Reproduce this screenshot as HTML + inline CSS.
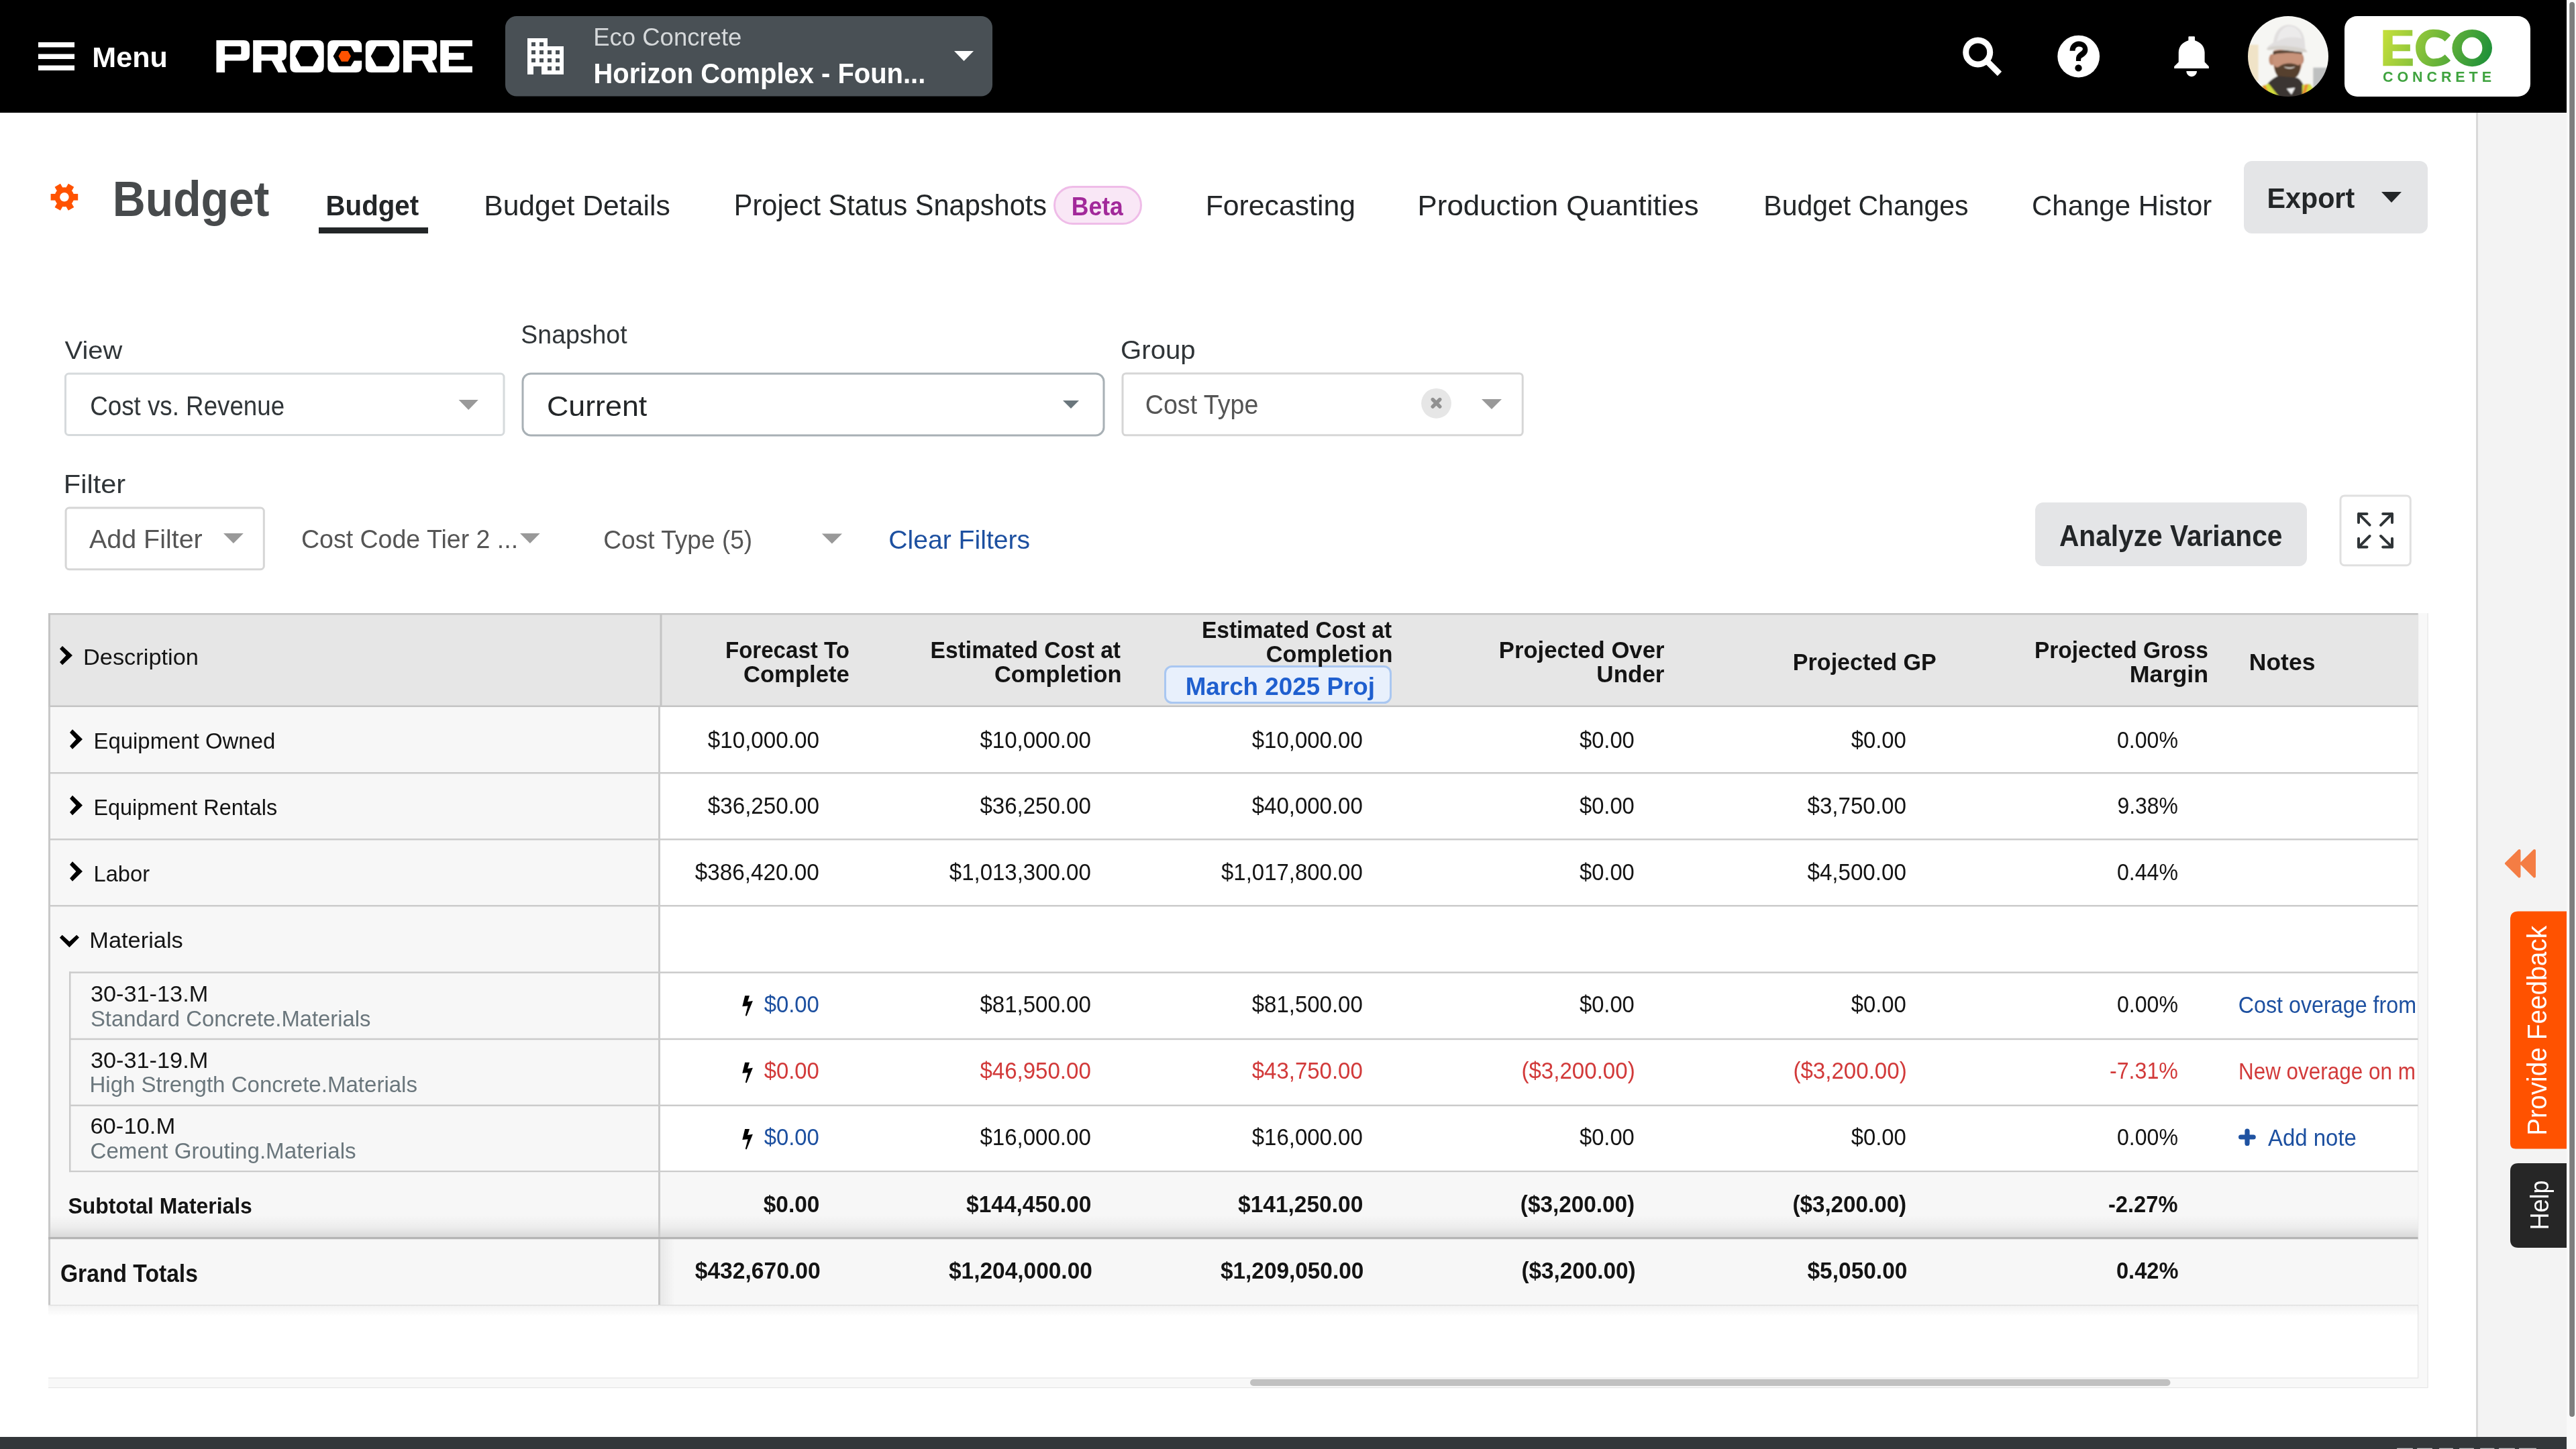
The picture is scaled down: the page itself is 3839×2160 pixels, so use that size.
<!DOCTYPE html>
<html><head><meta charset="utf-8"><title>Budget</title>
<style>
html,body{margin:0;padding:0;width:3839px;height:2160px;overflow:hidden;background:#fff;}
svg{position:absolute;left:0;top:0;display:block;will-change:transform;}
text{font-family:"Liberation Sans",sans-serif;white-space:pre;}
</style></head>
<body>
<svg width="3839" height="2160" viewBox="0 0 3839 2160">
<defs>
<clipPath id="notes"><rect x="3300" y="1400" width="302.5" height="300"/></clipPath>
<clipPath id="av"><circle cx="3410" cy="84" r="60"/></clipPath>
<linearGradient id="eco" x1="0" y1="0" x2="1" y2="1"><stop offset="0" stop-color="#c4de3a"/><stop offset="1" stop-color="#1f8f3a"/></linearGradient>
<linearGradient id="subsh" x1="0" y1="0" x2="0" y2="1"><stop offset="0" stop-color="#000" stop-opacity="0"/><stop offset="0.55" stop-color="#000" stop-opacity="0.045"/><stop offset="1" stop-color="#000" stop-opacity="0.12"/></linearGradient>
<linearGradient id="gtsh" x1="0" y1="0" x2="0" y2="1"><stop offset="0" stop-color="#000" stop-opacity="0.05"/><stop offset="1" stop-color="#000" stop-opacity="0"/></linearGradient>
<linearGradient id="colsh" x1="0" y1="0" x2="1" y2="0"><stop offset="0" stop-color="#000" stop-opacity="0.06"/><stop offset="1" stop-color="#000" stop-opacity="0"/></linearGradient>
</defs>
<!-- top bar -->
<rect x="0" y="0" width="3825" height="168" fill="#000"/>
<rect x="57" y="63" width="54" height="7.5" fill="#fff"/>
<rect x="57" y="80.5" width="54" height="7.5" fill="#fff"/>
<rect x="57" y="97.5" width="54" height="7.5" fill="#fff"/>
<g transform="translate(310 50) scale(0.15916)" fill="#fff" fill-rule="evenodd">
<path d="M78,63 H335 Q390,63 390,118 V200 Q390,255 335,255 H158 V365 H78 Z M158,120 V197 H298 Q310,197 310,185 V132 Q310,120 298,120 Z"/>
<path d="M422,63 H680 Q735,63 735,118 V200 Q735,248 690,255 L740,365 H658 L597,255 H500 V365 H422 Z M500,120 V197 H643 Q655,197 655,185 V132 Q655,120 643,120 Z"/>
<path d="M823,63 H1030 Q1085,63 1085,118 V310 Q1085,365 1030,365 H823 Q768,365 768,310 V118 Q768,63 823,63 Z M818,212 L868,120 H982 L1035,212 L982,307 H868 Z"/>
<path d="M1175,63 H1385 Q1440,63 1440,118 V175 H1368 L1337,120 H1225 L1172,212 L1225,307 H1337 L1368,255 H1440 V310 Q1440,365 1385,365 H1175 Q1120,365 1120,310 V118 Q1120,63 1175,63 Z"/>
<path d="M1222,212 L1250,163 H1310 L1338,212 L1310,263 H1250 Z" fill="#ff5200"/>
<path d="M1530,63 H1737 Q1792,63 1792,118 V310 Q1792,365 1737,365 H1530 Q1475,365 1475,310 V118 Q1475,63 1530,63 Z M1525,212 L1578,120 H1690 L1743,212 L1690,307 H1578 Z"/>
<path d="M1828,63 H2088 Q2143,63 2143,118 V200 Q2143,248 2098,255 L2148,365 H2066 L2005,255 H1908 V365 H1828 Z M1908,120 V197 H2051 Q2063,197 2063,185 V132 Q2063,120 2051,120 Z"/>
<path d="M2175,63 H2475 V120 H2255 V180 H2395 V245 H2255 V307 H2475 V365 H2175 Z"/>
</g>
<rect x="753" y="24" width="726" height="119.5" rx="17" fill="#495055"/>
<g transform="translate(786 57) scale(6)">
<path d="M0,0 H5 V2 H9 V9 H3.5 V7 H1.5 V9 H0 Z" fill="#fff"/>
<g fill="#495055"><rect x="1" y="1" width="1" height="1"/><rect x="3" y="1" width="1" height="1"/>
<rect x="1" y="3" width="1" height="1"/><rect x="3" y="3" width="1" height="1"/><rect x="5" y="3" width="1" height="1"/><rect x="7" y="3" width="1" height="1"/>
<rect x="1" y="5" width="1" height="1"/><rect x="3" y="5" width="1" height="1"/><rect x="5" y="5" width="1" height="1"/><rect x="7" y="5" width="1" height="1"/>
<rect x="5" y="7" width="1" height="1"/><rect x="7" y="7" width="1" height="1"/></g>
</g>
<polygon points="1422,76 1451,76 1436.5,91" fill="#fff"/>
<!-- search -->
<circle cx="2947.7" cy="77.9" r="18" fill="none" stroke="#fff" stroke-width="9"/>
<line x1="2961" y1="91" x2="2980" y2="110" stroke="#fff" stroke-width="8.9"/>
<!-- help -->
<circle cx="3097.7" cy="84.1" r="31.4" fill="#fff"/>
<g transform="translate(2910 40) scale(0.089286)" fill="#000">
<path d="M1955,400 C1955,300 2030,240 2105,240 C2190,240 2255,300 2255,380 C2255,450 2205,490 2150,520 C2143,526 2140,540 2140,570 H2060 V535 C2060,480 2090,450 2130,420 C2160,400 2172,388 2172,368 C2172,345 2150,330 2108,330 C2070,330 2045,355 2045,400 Z"/>
<circle cx="2100" cy="688" r="58"/>
</g>
<!-- bell -->
<g transform="translate(3220 40) scale(0.10093)" fill="#fff">
<path d="M410,200 V150 Q410,140 420,140 H495 Q505,140 505,150 V200 C590,225 650,290 650,380 V520 L712,585 V615 H200 V585 L265,520 V380 C265,290 325,225 410,200 Z M380,655 H535 C535,700 500,735 457,735 C415,735 380,700 380,655 Z"/>
</g>
<!-- avatar -->
<defs><filter id="avblur" x="-5%" y="-5%" width="110%" height="110%"><feGaussianBlur stdDeviation="9"/></filter></defs>
<g clip-path="url(#av)">
<g transform="translate(3345 20) scale(0.08972)" filter="url(#avblur)">
<rect x="0" y="0" width="1449" height="1449" fill="#f6f6f3"/>
<rect x="40" y="520" width="190" height="600" fill="#e9cf9c" opacity="0.5"/>
<rect x="1140" y="900" width="260" height="380" fill="#7a7f82" opacity="0.45"/>
<ellipse cx="455" cy="770" rx="50" ry="95" fill="#c08a70"/>
<ellipse cx="950" cy="760" rx="35" ry="80" fill="#b98268"/>
<path d="M480,620 C520,590 900,590 955,640 C975,760 960,900 900,1000 C850,1070 780,1100 715,1100 C640,1100 560,1060 520,990 C470,900 465,760 480,620 Z" fill="#c8937a"/>
<path d="M470,640 C520,600 900,600 955,650 L950,680 C880,650 540,650 480,690 Z" fill="#5a4434"/>
<path d="M500,860 C530,930 570,880 630,850 C690,825 800,825 860,850 C900,870 915,860 925,830 C940,920 915,1010 860,1060 C800,1100 640,1110 570,1060 C515,1010 490,930 500,860 Z" fill="#56402f"/>
<path d="M650,880 C700,905 800,905 840,880 C820,925 690,930 650,880 Z" fill="#f3efe9"/>
<path d="M380,1170 C440,1100 520,1050 560,1040 L880,1070 C930,1100 960,1150 980,1190 L1000,1449 L380,1449 Z" fill="#3a3430"/>
<path d="M700,1250 L840,1235 L780,1350 Z" fill="#f2f2f2"/>
<path d="M280,1210 L400,1165 L570,1380 L560,1449 L420,1449 Z" fill="#d3dc3e"/>
<path d="M300,1205 L345,1190 L450,1449 L400,1449 Z" fill="#e98a34"/>
<path d="M960,1185 L1090,1170 L1150,1260 L1040,1449 L960,1449 Z" fill="#d3dc3e"/>
<path d="M1005,1180 L1060,1175 L1000,1380 L965,1330 Z" fill="#e98a34"/>
<path d="M365,600 C380,540 440,520 480,480 C500,300 600,190 730,190 C880,190 990,300 1000,470 L1010,600 C1030,612 1046,628 1042,642 C900,655 700,600 560,598 C470,598 400,620 365,600 Z" fill="#e1dfdf"/>
<path d="M540,470 C560,320 640,220 740,215 C860,215 930,300 950,420 C850,380 650,380 540,470 Z" fill="#ecebeb"/>
<path d="M370,595 C400,560 440,550 480,545 C700,530 900,560 1010,600 L1040,640 C900,650 700,605 560,600 C470,600 400,620 370,595 Z" fill="#d6d2cc"/>
</g>
</g>
<!-- eco logo -->
<rect x="3494" y="24" width="277" height="120" rx="19" fill="#fff"/>
<g transform="translate(3490 20) scale(0.11257)">
<defs><linearGradient id="eco2" gradientUnits="userSpaceOnUse" x1="560" y1="220" x2="1900" y2="740"><stop offset="0" stop-color="#c5df3b"/><stop offset="0.5" stop-color="#72b83a"/><stop offset="1" stop-color="#1f9139"/></linearGradient></defs>
<path d="M545,220 H935 V297 H672 V410 H905 V500 H672 V597 H940 V695 H545 Z" fill="url(#eco2)"/>
<path d="M1440,290 C1395,240 1310,212 1209,212 C1075,212 978,320 978,458 C978,596 1075,703 1209,703 C1310,703 1395,676 1440,625 L1365,545 C1330,585 1275,600 1215,600 C1150,600 1105,540 1105,458 C1105,376 1150,315 1215,315 C1275,315 1330,330 1365,370 Z" fill="url(#eco2)"/>
<path d="M1460,458 A265,245 0 1 0 1990,458 A265,245 0 1 0 1460,458 Z M1588,458 A136,143 0 1 1 1860,458 A136,143 0 1 1 1588,458 Z" fill="url(#eco2)" fill-rule="evenodd"/>
</g>
<text x="3551" y="122" font-size="21.5" font-weight="bold" fill="#3fa33f" textLength="162" lengthAdjust="spacing">CONCRETE</text>
<!-- right scrollbar + panel -->
<rect x="3825" y="0" width="14" height="2160" fill="#f9f9f9"/>
<rect x="3829.2" y="3" width="7.8" height="2109" rx="3.9" fill="#7f7f7f"/>
<rect x="3690" y="168" width="135" height="1974" fill="#f3f3f3"/>
<rect x="3690" y="168" width="3" height="1974" fill="#d9d9d9"/>
<path d="M3754.5,1268 L3754.5,1306.5 L3735,1287.2 Z M3777,1268 L3777,1306.5 L3757.5,1287.2 Z" fill="#f47d44" stroke="#f47d44" stroke-width="4" stroke-linejoin="round"/>
<path d="M3753,1358.5 H3825 V1712.5 H3749 Q3741,1712.5 3741,1704.5 V1370.5 Q3741,1358.5 3753,1358.5 Z" fill="#ff5200"/>
<path d="M3753,1734 H3825 V1860 H3753 Q3741,1860 3741,1848 V1746 Q3741,1734 3753,1734 Z" fill="#262626"/>
<text transform="translate(3795.3 1692.8) rotate(-90)" font-size="40" fill="#fff" textLength="313" lengthAdjust="spacingAndGlyphs">Provide Feedback</text>
<text transform="translate(3797.6 1833.5) rotate(-90)" font-size="39.5" fill="#fff" textLength="74" lengthAdjust="spacingAndGlyphs">Help</text>
<!-- bottom bar -->
<rect x="0" y="2142" width="3825" height="18" fill="#33373a"/>
<rect x="3572" y="2158.8" width="24" height="1.2" fill="#c9cacb" rx="0.6"/><rect x="3602" y="2158.8" width="23" height="1.2" fill="#c9cacb" rx="0.6"/><rect x="3635" y="2158.8" width="21" height="1.2" fill="#c9cacb" rx="0.6"/><rect x="3665" y="2158.8" width="22" height="1.2" fill="#c9cacb" rx="0.6"/><rect x="3696" y="2158.8" width="21.5" height="1.2" fill="#c9cacb" rx="0.6"/><rect x="3724" y="2158.8" width="24" height="1.2" fill="#c9cacb" rx="0.6"/><rect x="3754" y="2158.8" width="26" height="1.2" fill="#c9cacb" rx="0.6"/>
<!-- gear -->
<g transform="translate(95.9 293.8)" fill="#ff5200">
<circle r="14.5"/>
<rect x="-20.3" y="-4.85" width="40.6" height="9.7"/>
<rect x="-20.3" y="-4.85" width="40.6" height="9.7" transform="rotate(60)"/>
<rect x="-20.3" y="-4.85" width="40.6" height="9.7" transform="rotate(120)"/>
<circle r="6.8" fill="#fff"/>
</g>
<!-- tabs -->
<rect x="475" y="339" width="163" height="9" fill="#232628"/>
<rect x="1571.5" y="278.5" width="129" height="55" rx="27.5" fill="#f9e7f6" stroke="#efbce8" stroke-width="3"/>
<rect x="3344" y="240" width="274" height="108" rx="12" fill="#e4e5e7"/>
<polygon points="3549,286 3579,286 3564,302" fill="#232628"/>
<!-- selects -->
<rect x="97.5" y="557" width="653.5" height="91.5" rx="5" fill="#fff" stroke="#d6dadc" stroke-width="3"/>
<polygon points="683.6,596 712.8,596 698.2,611" fill="#999"/>
<rect x="779" y="556.9" width="866" height="92" rx="12" fill="#fff" stroke="#a8b0b5" stroke-width="3"/>
<polygon points="1584,597 1608,597 1596,609" fill="#6a767c"/>
<rect x="1673" y="556.7" width="596.2" height="92.1" rx="5" fill="#fff" stroke="#d6d6d6" stroke-width="3"/>
<circle cx="2140.5" cy="601.3" r="22.4" fill="#e6e6e6"/>
<path d="M2135.2,595.5 L2145.8,606.1 M2145.8,595.5 L2135.2,606.1" stroke="#919191" stroke-width="5.4" stroke-linecap="round"/>
<polygon points="2208,595 2238,595 2223,610" fill="#999"/>
<rect x="98.1" y="757" width="295.2" height="91.7" rx="5" fill="#fff" stroke="#d6d6d6" stroke-width="3"/>
<polygon points="333,795 362.8,795 347.9,810" fill="#999"/>
<polygon points="775,795 804.7,795 789.9,810" fill="#999"/>
<polygon points="1224.8,795.4 1255,795.4 1239.9,810.4" fill="#999"/>
<rect x="3033" y="749" width="405" height="95" rx="12" fill="#e4e5e7"/>
<rect x="3488" y="738.9" width="104.3" height="103.8" rx="6" fill="#fff" stroke="#e0e0e0" stroke-width="3"/>
<g stroke="#2f3437" stroke-width="4" stroke-linecap="round" stroke-linejoin="round" fill="none">
<path d="M3527.5,765.9 H3515 V778.9 M3515,765.9 L3531.6,782.6"/>
<path d="M3551.2,765.9 H3565 V778.9 M3565,765.9 L3548.1,782.8"/>
<path d="M3527.5,815.6 H3515 V802.8 M3515,815.6 L3531.6,799"/>
<path d="M3551.2,815.6 H3565 V802.8 M3565,815.6 L3548.1,799"/>
</g>
<!-- table frame -->
<rect x="72" y="914" width="3546" height="1155" fill="#f8f8f8"/>
<rect x="72" y="914" width="3531.5" height="1140" fill="#fff"/>
<g fill="#e6e6e6">
<rect x="72" y="2053.5" width="3531.5" height="1.2"/>
<rect x="72" y="2068" width="3546" height="1.2"/>
<rect x="3603" y="914" width="1.2" height="1140.7"/>
<rect x="3617.5" y="914" width="1.2" height="1155"/>
</g>
<rect x="1863" y="2056" width="1371.5" height="10" rx="5" fill="#c1c1c1"/>
<!-- header -->
<rect x="72" y="914" width="3531.5" height="140" fill="#e6e6e6"/>
<rect x="72" y="914" width="3531.5" height="2.5" fill="#c4c4c4"/>
<rect x="72" y="1051.5" width="3531.5" height="2.5" fill="#c4c4c4"/>
<rect x="983.5" y="914" width="3" height="140" fill="#c4c4c4"/>
<rect x="72" y="914" width="3" height="140" fill="#c4c4c4"/>
<rect x="1736.5" y="993.5" width="336" height="54" rx="10" fill="#e8f0fc" stroke="#a9c7f1" stroke-width="3"/>
<!-- body -->
<rect x="75" y="1054" width="907" height="790" fill="#f7f7f7"/>
<g fill="#cbcbcb">
<rect x="72" y="1151" width="3531.5" height="2.5"/>
<rect x="72" y="1250" width="3531.5" height="2.5"/>
<rect x="72" y="1349" width="3531.5" height="2.5"/>
<rect x="103" y="1448.4" width="3500.5" height="2.5"/>
<rect x="103" y="1547.7" width="3500.5" height="2.5"/>
<rect x="103" y="1646.6" width="3500.5" height="2.5"/>
<rect x="103" y="1745" width="3500.5" height="2.5"/>
<rect x="103" y="1448.4" width="2.5" height="299"/>
</g>
<rect x="75" y="1747.5" width="3528.5" height="96.5" fill="#f7f7f7"/>
<rect x="75" y="1812" width="3528.5" height="32" fill="url(#subsh)"/>
<rect x="72" y="1054" width="3" height="892" fill="#c8c8c8"/>
<rect x="981" y="1054" width="3" height="892" fill="#cbcbcb"/>
<rect x="72" y="1844" width="3531.5" height="3.5" fill="#b4b4b4"/>
<rect x="75" y="1847.5" width="3528.5" height="97.5" fill="#f7f7f7"/>
<rect x="981" y="1847.5" width="3" height="97.5" fill="#c8c8c8"/>
<rect x="984" y="1847.5" width="22" height="97.5" fill="url(#colsh)"/>
<rect x="72" y="1945" width="3531.5" height="1.2" fill="#dcdcdc"/>
<rect x="72" y="1946.2" width="3531.5" height="16" fill="url(#gtsh)"/>
<!-- chevrons -->
<g fill="#000">
<path d="M89,967.3 L93,963 L108,977 L93,991.3 L89,987 L98.5,977 Z"/>
<path d="M104,1092 L108,1087.3 L123,1102 L108,1116.7 L104,1112.3 L113.4,1102 Z"/>
<path d="M104,1190.5 L108,1185.8 L123,1200.5 L108,1215.2 L104,1210.8 L113.4,1200.5 Z"/>
<path d="M104,1289 L108,1284.3 L123,1299 L108,1313.7 L104,1309.3 L113.4,1299 Z"/>
<path d="M88.9,1397.7 L92.7,1393.7 L103.4,1403.6 L114.2,1393.7 L118,1397.5 L103.4,1412.3 Z"/>
</g>
<!-- bolts -->
<g fill="#000">
<path d="M1110.2,1484.2 L1117.0,1484.2 L1114.1,1493.3 L1121.9,1492.1 L1112.9,1514.1 Q1111.8,1515.6 1110.9,1513.6 L1114.6,1499.5 L1106.3,1500.2 Z"/>
<path d="M1110.2,1583.8 L1117.0,1583.8 L1114.1,1592.9 L1121.9,1591.7 L1112.9,1613.7 Q1111.8,1615.2 1110.9,1613.2 L1114.6,1599.1 L1106.3,1599.8 Z"/>
<path d="M1110.2,1682.9 L1117.0,1682.9 L1114.1,1692.0 L1121.9,1690.8 L1112.9,1712.8 Q1111.8,1714.3 1110.9,1712.3 L1114.6,1698.2 L1106.3,1698.9 Z"/>
</g>
<!-- add note plus -->
<path d="M3339.6,1695 H3358.2 M3349,1686 V1704.4" stroke="#1f52a1" stroke-width="7.2" stroke-linecap="round" fill="none"/>

<text transform="translate(137.31 100.00) scale(0.9957 1)" font-size="43.26" font-weight="bold" fill="#ffffff">Menu</text>
<text transform="translate(884.15 68.00) scale(1.0070 1)" font-size="36.28" fill="#d5d8da">Eco Concrete</text>
<text transform="translate(884.50 124.00) scale(0.9235 1)" font-size="43.26" font-weight="bold" fill="#ffffff">Horizon Complex - Foun...</text>
<text transform="translate(167.76 321.50) scale(0.9258 1)" font-size="73.26" font-weight="bold" fill="#474a4c">Budget</text>
<text transform="translate(485.48 320.50) scale(0.9464 1)" font-size="42.56" font-weight="bold" fill="#232628">Budget</text>
<text transform="translate(721.17 321.00) scale(0.9866 1)" font-size="43.26" fill="#232628">Budget Details</text>
<text transform="translate(1093.75 321.00) scale(0.9305 1)" font-size="44.65" fill="#232628">Project Status Snapshots</text>
<text transform="translate(1596.78 320.50) scale(0.9257 1)" font-size="38.37" font-weight="bold" fill="#a2299a">Beta</text>
<text transform="translate(1796.66 321.00) scale(0.9887 1)" font-size="43.26" fill="#232628">Forecasting</text>
<text transform="translate(2112.57 321.00) scale(1.0138 1)" font-size="43.26" fill="#232628">Production Quantities</text>
<text transform="translate(2628.30 321.00) scale(0.9473 1)" font-size="43.26" fill="#232628">Budget Changes</text>
<text transform="translate(3028.03 321.00) scale(0.9699 1)" font-size="43.26" fill="#232628">Change Histor</text>
<text transform="translate(3378.42 310.00) scale(0.9703 1)" font-size="42.56" font-weight="bold" fill="#232628">Export</text>
<text transform="translate(96.60 534.50) scale(1.0572 1)" font-size="37.67" fill="#303538">View</text>
<text transform="translate(776.33 511.70) scale(0.9689 1)" font-size="38.65" fill="#303538">Snapshot</text>
<text transform="translate(1670.12 534.80) scale(1.0160 1)" font-size="39.49" fill="#303538">Group</text>
<text transform="translate(134.28 618.60) scale(0.9204 1)" font-size="39.91" fill="#303538">Cost vs. Revenue</text>
<text transform="translate(814.90 619.70) scale(1.0321 1)" font-size="43.40" fill="#232628">Current</text>
<text transform="translate(1706.74 617.00) scale(0.9461 1)" font-size="39.77" fill="#555555">Cost Type</text>
<text transform="translate(94.75 735.30) scale(1.0649 1)" font-size="39.07" fill="#303538">Filter</text>
<text transform="translate(133.00 816.60) scale(1.0355 1)" font-size="38.09" fill="#555555">Add Filter</text>
<text transform="translate(448.94 817.00) scale(0.9712 1)" font-size="38.65" fill="#555555">Cost Code Tier 2 ...</text>
<text transform="translate(899.26 817.60) scale(0.9428 1)" font-size="39.35" fill="#555555">Cost Type (5)</text>
<text transform="translate(1324.16 818.00) scale(1.0023 1)" font-size="39.07" fill="#1d50a0">Clear Filters</text>
<text transform="translate(3068.96 813.70) scale(0.9030 1)" font-size="45.07" font-weight="bold" fill="#232628">Analyze Variance</text>
<text transform="translate(124.01 990.70) scale(1.0095 1)" font-size="34.05" fill="#141414">Description</text>
<text transform="translate(1080.93 980.50) scale(0.9413 1)" font-size="35.16" font-weight="bold" fill="#141414">Forecast To</text>
<text transform="translate(1107.92 1016.50) scale(0.9859 1)" font-size="35.16" font-weight="bold" fill="#141414">Complete</text>
<text transform="translate(1386.60 980.50) scale(0.9548 1)" font-size="35.16" font-weight="bold" fill="#141414">Estimated Cost at</text>
<text transform="translate(1481.92 1016.50) scale(0.9812 1)" font-size="35.16" font-weight="bold" fill="#141414">Completion</text>
<text transform="translate(1790.90 951.00) scale(0.9538 1)" font-size="35.16" font-weight="bold" fill="#141414">Estimated Cost at</text>
<text transform="translate(1886.73 987.00) scale(0.9770 1)" font-size="35.16" font-weight="bold" fill="#141414">Completion</text>
<text transform="translate(1766.70 1035.60) scale(0.9811 1)" font-size="37.53" font-weight="bold" fill="#1f5fcf">March 2025 Proj</text>
<text transform="translate(2233.83 980.50) scale(0.9860 1)" font-size="35.16" font-weight="bold" fill="#141414">Projected Over</text>
<text transform="translate(2379.36 1016.50) scale(0.9955 1)" font-size="35.16" font-weight="bold" fill="#141414">Under</text>
<text transform="translate(2671.87 998.60) scale(0.9693 1)" font-size="35.16" font-weight="bold" fill="#141414">Projected GP</text>
<text transform="translate(3031.90 980.50) scale(0.9533 1)" font-size="35.16" font-weight="bold" fill="#141414">Projected Gross</text>
<text transform="translate(3173.76 1016.50) scale(1.0192 1)" font-size="35.16" font-weight="bold" fill="#141414">Margin</text>
<text transform="translate(3351.78 998.60) scale(1.0099 1)" font-size="35.16" font-weight="bold" fill="#141414">Notes</text>
<text transform="translate(139.43 1116.00) scale(0.9833 1)" font-size="33.49" fill="#141414">Equipment Owned</text>
<text transform="translate(139.47 1215.00) scale(0.9675 1)" font-size="33.49" fill="#141414">Equipment Rentals</text>
<text transform="translate(139.44 1313.70) scale(0.9774 1)" font-size="33.49" fill="#141414">Labor</text>
<text transform="translate(133.31 1413.00) scale(1.0396 1)" font-size="33.07" fill="#141414">Materials</text>
<text transform="translate(134.93 1493.30) scale(1.0415 1)" font-size="32.93" fill="#141414">30-31-13.M</text>
<text transform="translate(134.97 1529.80) scale(0.9880 1)" font-size="33.21" fill="#6a767c">Standard Concrete.Materials</text>
<text transform="translate(134.93 1591.80) scale(1.0415 1)" font-size="32.93" fill="#141414">30-31-19.M</text>
<text transform="translate(133.42 1628.30) scale(0.9952 1)" font-size="33.21" fill="#6a767c">High Strength Concrete.Materials</text>
<text transform="translate(134.38 1690.40) scale(1.0510 1)" font-size="32.93" fill="#141414">60-10.M</text>
<text transform="translate(134.45 1726.90) scale(0.9987 1)" font-size="33.21" fill="#6a767c">Cement Grouting.Materials</text>
<text transform="translate(101.50 1808.50) scale(0.9593 1)" font-size="33.21" font-weight="bold" fill="#141414">Subtotal Materials</text>
<text transform="translate(89.95 1911.40) scale(0.9134 1)" font-size="36.84" font-weight="bold" fill="#141414">Grand Totals</text>
<text transform="translate(1054.80 1114.80) scale(0.9343 1)" font-size="35.51" fill="#141414">$10,000.00</text>
<text transform="translate(1460.40 1114.80) scale(0.9309 1)" font-size="35.51" fill="#141414">$10,000.00</text>
<text transform="translate(1865.70 1114.80) scale(0.9292 1)" font-size="35.51" fill="#141414">$10,000.00</text>
<text transform="translate(2354.00 1114.80) scale(0.9208 1)" font-size="35.51" fill="#141414">$0.00</text>
<text transform="translate(2758.70 1114.80) scale(0.9242 1)" font-size="35.51" fill="#141414">$0.00</text>
<text transform="translate(3155.00 1114.80) scale(0.9035 1)" font-size="35.51" fill="#141414">0.00%</text>
<text transform="translate(1054.80 1213.30) scale(0.9343 1)" font-size="35.51" fill="#141414">$36,250.00</text>
<text transform="translate(1460.40 1213.30) scale(0.9309 1)" font-size="35.51" fill="#141414">$36,250.00</text>
<text transform="translate(1865.70 1213.30) scale(0.9292 1)" font-size="35.51" fill="#141414">$40,000.00</text>
<text transform="translate(2354.00 1213.30) scale(0.9208 1)" font-size="35.51" fill="#141414">$0.00</text>
<text transform="translate(2693.50 1213.30) scale(0.9327 1)" font-size="35.51" fill="#141414">$3,750.00</text>
<text transform="translate(3155.50 1213.30) scale(0.8984 1)" font-size="35.51" fill="#141414">9.38%</text>
<text transform="translate(1035.70 1312.00) scale(0.9376 1)" font-size="35.51" fill="#141414">$386,420.00</text>
<text transform="translate(1414.80 1312.00) scale(0.9294 1)" font-size="35.51" fill="#141414">$1,013,300.00</text>
<text transform="translate(1820.00 1312.00) scale(0.9285 1)" font-size="35.51" fill="#141414">$1,017,800.00</text>
<text transform="translate(2354.00 1312.00) scale(0.9208 1)" font-size="35.51" fill="#141414">$0.00</text>
<text transform="translate(2693.50 1312.00) scale(0.9327 1)" font-size="35.51" fill="#141414">$4,500.00</text>
<text transform="translate(3155.00 1312.00) scale(0.9035 1)" font-size="35.51" fill="#141414">0.44%</text>
<text transform="translate(1138.70 1508.70) scale(0.9242 1)" font-size="35.51" fill="#1d50a0">$0.00</text>
<text transform="translate(1460.40 1508.70) scale(0.9309 1)" font-size="35.51" fill="#141414">$81,500.00</text>
<text transform="translate(1865.70 1508.70) scale(0.9292 1)" font-size="35.51" fill="#141414">$81,500.00</text>
<text transform="translate(2354.00 1508.70) scale(0.9208 1)" font-size="35.51" fill="#141414">$0.00</text>
<text transform="translate(2758.70 1508.70) scale(0.9242 1)" font-size="35.51" fill="#141414">$0.00</text>
<text transform="translate(3155.00 1508.70) scale(0.9035 1)" font-size="35.51" fill="#141414">0.00%</text>
<text transform="translate(1138.70 1608.30) scale(0.9242 1)" font-size="35.51" fill="#d23a3a">$0.00</text>
<text transform="translate(1460.40 1608.30) scale(0.9309 1)" font-size="35.51" fill="#d23a3a">$46,950.00</text>
<text transform="translate(1865.70 1608.30) scale(0.9292 1)" font-size="35.51" fill="#d23a3a">$43,750.00</text>
<text transform="translate(2267.45 1608.30) scale(0.9321 1)" font-size="35.51" fill="#d23a3a">($3,200.00)</text>
<text transform="translate(2672.45 1608.30) scale(0.9321 1)" font-size="35.51" fill="#d23a3a">($3,200.00)</text>
<text transform="translate(3143.99 1608.30) scale(0.9064 1)" font-size="35.51" fill="#d23a3a">-7.31%</text>
<text transform="translate(1138.70 1707.40) scale(0.9242 1)" font-size="35.51" fill="#1d50a0">$0.00</text>
<text transform="translate(1460.40 1707.40) scale(0.9309 1)" font-size="35.51" fill="#141414">$16,000.00</text>
<text transform="translate(1865.70 1707.40) scale(0.9292 1)" font-size="35.51" fill="#141414">$16,000.00</text>
<text transform="translate(2354.00 1707.40) scale(0.9208 1)" font-size="35.51" fill="#141414">$0.00</text>
<text transform="translate(2758.70 1707.40) scale(0.9242 1)" font-size="35.51" fill="#141414">$0.00</text>
<text transform="translate(3155.00 1707.40) scale(0.9035 1)" font-size="35.51" fill="#141414">0.00%</text>
<text transform="translate(1137.80 1807.00) scale(0.9404 1)" font-size="35.51" font-weight="bold" fill="#141414">$0.00</text>
<text transform="translate(1440.00 1807.00) scale(0.9438 1)" font-size="35.51" font-weight="bold" fill="#141414">$144,450.00</text>
<text transform="translate(1845.00 1807.00) scale(0.9438 1)" font-size="35.51" font-weight="bold" fill="#141414">$141,250.00</text>
<text transform="translate(2265.84 1807.00) scale(0.9381 1)" font-size="35.51" font-weight="bold" fill="#141414">($3,200.00)</text>
<text transform="translate(2671.44 1807.00) scale(0.9348 1)" font-size="35.51" font-weight="bold" fill="#141414">($3,200.00)</text>
<text transform="translate(3141.98 1807.00) scale(0.9199 1)" font-size="35.51" font-weight="bold" fill="#141414">-2.27%</text>
<text transform="translate(1035.70 1906.00) scale(0.9469 1)" font-size="35.51" font-weight="bold" fill="#141414">$432,670.00</text>
<text transform="translate(1414.00 1906.00) scale(0.9418 1)" font-size="35.51" font-weight="bold" fill="#141414">$1,204,000.00</text>
<text transform="translate(1819.00 1906.00) scale(0.9396 1)" font-size="35.51" font-weight="bold" fill="#141414">$1,209,050.00</text>
<text transform="translate(2267.44 1906.00) scale(0.9376 1)" font-size="35.51" font-weight="bold" fill="#141414">($3,200.00)</text>
<text transform="translate(2693.50 1906.00) scale(0.9424 1)" font-size="35.51" font-weight="bold" fill="#141414">$5,050.00</text>
<text transform="translate(3153.98 1906.00) scale(0.9186 1)" font-size="35.51" font-weight="bold" fill="#141414">0.42%</text>
<text transform="translate(3335.69 1510.20) scale(0.9441 1)" font-size="34.19" fill="#1d50a0">Cost overage from</text>
<g clip-path="url(#notes)"><text transform="translate(3335.94 1608.80) scale(0.9200 1)" font-size="34.19" fill="#d23a3a">New overage on m</text></g>
<text transform="translate(3380.00 1707.80) scale(0.9524 1)" font-size="34.60" fill="#1d50a0">Add note</text>
</svg>
</body></html>
